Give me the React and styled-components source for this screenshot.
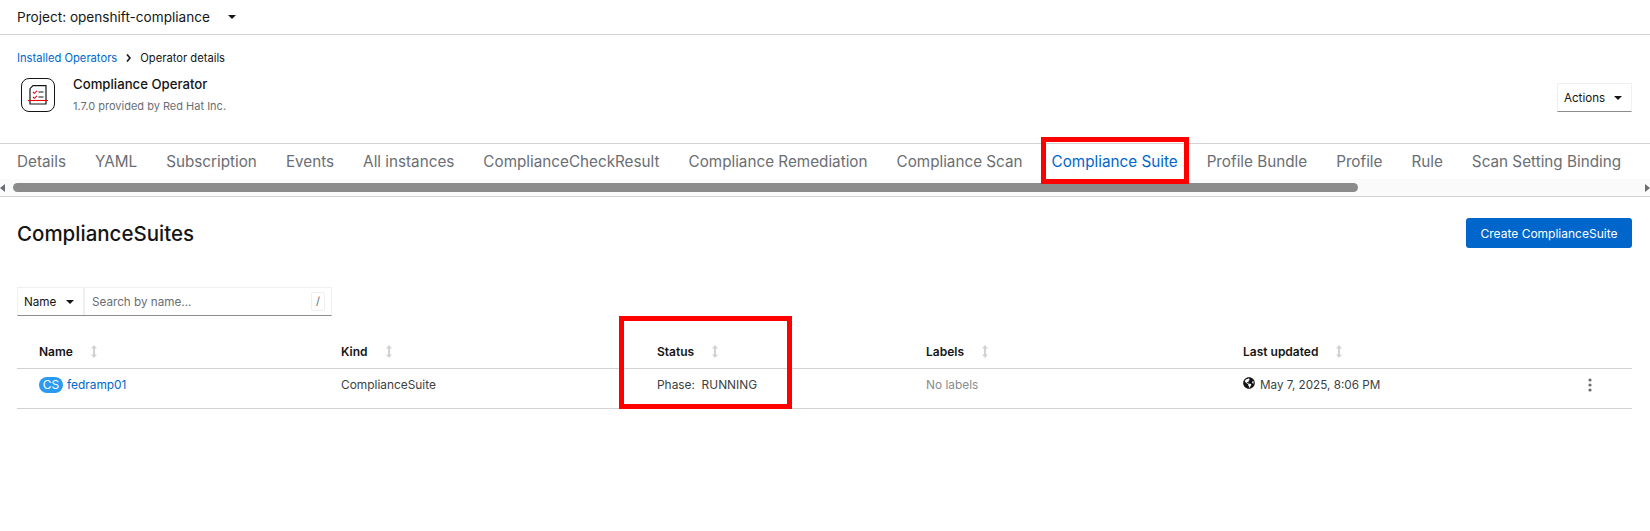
import React from 'react';
import styled, { createGlobalStyle } from 'styled-components';
import { FaGlobeAmericas } from 'react-icons/fa';

const GlobalStyle = createGlobalStyle`
    html, body {
        margin: 0;
        background: #fff;
        overflow: hidden;
    }
    body {
        font-family: "Inter", "Liberation Sans", sans-serif;
        color: #151515;
    }
`;

const Page = styled.div`
    position: relative;
    width: 1650px;
    height: 531px;
    overflow: hidden;
`;

const ProjectBar = styled.div`
    height: 34px;
    display: flex;
    align-items: center;
    padding-left: 17px;
    border-bottom: 1px solid #d2d2d2;
    font-size: 13.6px;
`;

const Caret = styled.span`
    display: inline-block;
    width: 0;
    height: 0;
    border-left: ${p => p.size || 4}px solid transparent;
    border-right: ${p => p.size || 4}px solid transparent;
    border-top: ${p => p.size || 4}px solid #151515;
    margin-left: ${p => p.gap || 0}px;
`;

const Header = styled.div`
    height: 108px;
    padding: 14px 18px 0 17px;
    display: flex;
    justify-content: space-between;
    box-sizing: border-box;
`;

const Breadcrumb = styled.div`
    display: flex;
    align-items: center;
    height: 18px;
    font-size: 11.2px;
    color: #151515;

    a {
        color: #0066cc;
    }

    svg {
        margin: 0 9px;
    }
`;

const Identity = styled.div`
    display: flex;
    margin: 11px 0 0 4px;
`;

const LogoBox = styled.div`
    width: 34px;
    height: 34px;
    box-sizing: border-box;
    border: 1.5px solid #151515;
    border-radius: 8px;
    display: flex;
    align-items: center;
    justify-content: center;
`;

const TitleBlock = styled.div`
    margin-left: 18px;
`;

const Title = styled.div`
    font-size: 13.2px;
    font-weight: 500;
    line-height: 16px;
    color: #151515;
    margin-top: -2px;
`;

const Subtitle = styled.div`
    font-size: 11px;
    line-height: 14px;
    margin-top: 7px;
    color: #6a6e73;
`;

const ActionsButton = styled.div`
    width: 75px;
    height: 29px;
    margin-top: 34px;
    padding-left: 6px;
    box-sizing: border-box;
    display: flex;
    align-items: center;
    font-size: 11.6px;
    border: 1px solid #f0f0f0;
    border-bottom-color: #8a8d90;
`;

const Tabs = styled.div`
    border-top: 1px solid #d2d2d2;
    border-bottom: 1px solid #d2d2d2;
    height: 54px;
    box-sizing: border-box;
`;

const TabRow = styled.div`
    display: flex;
    gap: 29px;
    height: 35px;
    align-items: center;
    padding-left: 17px;
    white-space: nowrap;
`;

const Tab = styled.span`
    font-size: 15.25px;
    color: ${p => (p.$active ? '#0066cc' : '#6a6e73')};
`;

const ScrollTrack = styled.div`
    height: 17px;
    background: #fafafa;
    display: flex;
    align-items: center;
    justify-content: space-between;
`;

const ScrollArrow = styled.span`
    width: 0;
    height: 0;
    border-top: 4px solid transparent;
    border-bottom: 4px solid transparent;
    ${p => (p.$right ? 'border-left: 5px solid #6a6e73;' : 'border-right: 5px solid #6a6e73;')}
`;

const ScrollThumb = styled.div`
    width: 1345px;
    height: 9px;
    background: #8b8b8b;
    border-radius: 5px;
    margin-right: 287px;
    margin-left: 8px;
`;

const Content = styled.div`
    padding: 21px 18px 0 17px;
`;

const SectionHead = styled.div`
    display: flex;
    align-items: center;
    justify-content: space-between;
    height: 30px;
`;

const Heading = styled.h1`
    margin: 0;
    font-size: 20.5px;
    font-weight: 500;
    color: #151515;
`;

const PrimaryButton = styled.div`
    width: 166px;
    height: 30px;
    border-radius: 3px;
    background: #0066cc;
    color: #fff;
    font-size: 12px;
    display: flex;
    align-items: center;
    justify-content: center;
`;

const Filter = styled.div`
    display: flex;
    width: 315px;
    height: 29px;
    margin-top: 39px;
    box-sizing: border-box;
    border: 1px solid #f0f0f0;
    border-bottom-color: #8a8d90;
    font-size: 11.7px;
`;

const FilterType = styled.div`
    width: 67px;
    box-sizing: border-box;
    padding-left: 6px;
    display: flex;
    align-items: center;
    border-right: 2px solid #f0f0f0;
`;

const SearchBox = styled.div`
    flex: 1;
    display: flex;
    align-items: center;
    justify-content: space-between;
    padding: 0 6px 0 7px;
    color: #6a6e73;
`;

const KeyHint = styled.span`
    width: 14px;
    height: 19px;
    box-sizing: border-box;
    border: 1px solid #f0f0f0;
    border-radius: 2px;
    text-align: center;
    font-size: 11px;
    line-height: 17px;
`;

const Row = styled.div`
    display: grid;
    grid-template-columns: 302px 316px 269px 317px 345px 44px;
    align-items: center;
    padding-left: 22px;
    height: ${p => p.$height}px;
    border-bottom: 1px solid #d2d2d2;
    box-sizing: border-box;
`;

const Table = styled.div`
    margin-top: 18px;
`;

const HeadCell = styled.div`
    display: flex;
    align-items: center;
    font-size: 12px;
    font-weight: 600;
    color: #151515;
`;

const Cell = styled.div`
    display: flex;
    align-items: center;
    font-size: 11.9px;
    color: ${p => (p.$muted ? '#8a8d90' : '#3c3f42')};
    position: relative;
    top: -4px;
`;

const Badge = styled.span`
    width: 24px;
    height: 16px;
    border-radius: 8px;
    background: #2b9af3;
    color: #fff;
    font-size: 12px;
    display: flex;
    align-items: center;
    justify-content: center;
    margin-right: 4px;
`;

const Link = styled.a`
    color: #0066cc;
`;

const SortIcon = styled.svg`
    margin-left: 18px;
`;

const Globe = styled(FaGlobeAmericas)`
    margin: -3px 5px 0 0;
    color: #151515;
`;

const DateText = styled.span`
    font-size: 11.7px;
`;

const Annotation = styled.div`
    position: absolute;
    left: ${p => p.$x}px;
    top: ${p => p.$y}px;
    width: ${p => p.$w}px;
    height: ${p => p.$h}px;
    box-sizing: border-box;
    border: 5px solid #ff0000;
`;

const Sort = () => (
    <SortIcon width="6" height="13" viewBox="0 0 6 13" fill="#d2d2d2">
        <path d="M3 0 L6 3.5 H4 V9.5 H6 L3 13 L0 9.5 H2 V3.5 H0 Z" />
    </SortIcon>
);

const tabs = ['Details', 'YAML', 'Subscription', 'Events', 'All instances', 'ComplianceCheckResult', 'Compliance Remediation', 'Compliance Scan', 'Compliance Suite', 'Profile Bundle', 'Profile', 'Rule', 'Scan Setting Binding'];
const columns = ['Name', 'Kind', 'Status', 'Labels', 'Last updated'];

export default function App() {
    return (
        <Page>
            <GlobalStyle />
            <ProjectBar>
                Project: openshift-compliance
                <Caret size={4} gap={18} />
            </ProjectBar>
            <Header>
                <div>
                    <Breadcrumb>
                        <a>Installed Operators</a>
                        <svg width="5" height="8" viewBox="0 0 5 8"><path d="M1 0.5 L4 4 L1 7.5" fill="none" stroke="#151515" strokeWidth="1.6" /></svg>
                        Operator details
                    </Breadcrumb>
                    <Identity>
                        <LogoBox>
                            <svg width="22" height="20" viewBox="0 0 22 20">
                                <path d="M6 0.7 H19 V19 H3 V3.700 Z" fill="none" stroke="#151515" strokeWidth="1.2" />
                                <path d="M6 7 L7.300 8.300 L10 5.800 M6 12 L7.300 13.300 L10 10.800" fill="none" stroke="#e00" strokeWidth="1.1" />
                                <path d="M11.500 7 H16.500 M11.500 12 H16.500" stroke="#151515" strokeWidth="1.1" />
                                <path d="M1 15.500 H21" stroke="#e00" strokeWidth="1.1" />
                            </svg>
                        </LogoBox>
                        <TitleBlock>
                            <Title>Compliance Operator</Title>
                            <Subtitle>1.7.0 provided by Red Hat Inc.</Subtitle>
                        </TitleBlock>
                    </Identity>
                </div>
                <ActionsButton>
                    Actions
                    <Caret size={4} gap={9} />
                </ActionsButton>
            </Header>
            <Tabs>
                <TabRow>
                    {tabs.map(t => <Tab key={t} $active={t === 'Compliance Suite'}>{t}</Tab>)}
                </TabRow>
                <ScrollTrack>
                    <ScrollArrow />
                    <ScrollThumb />
                    <ScrollArrow $right />
                </ScrollTrack>
            </Tabs>
            <Content>
                <SectionHead>
                    <Heading>ComplianceSuites</Heading>
                    <PrimaryButton>Create ComplianceSuite</PrimaryButton>
                </SectionHead>
                <Filter>
                    <FilterType>
                        Name
                        <Caret size={4} gap={10} />
                    </FilterType>
                    <SearchBox>
                        Search by name...
                        <KeyHint>/</KeyHint>
                    </SearchBox>
                </Filter>
                <Table>
                    <Row $height={35}>
                        {columns.map(c => <HeadCell key={c}>{c}<Sort /></HeadCell>)}
                    </Row>
                    <Row $height={40}>
                        <Cell><Badge>CS</Badge><Link>fedramp01</Link></Cell>
                        <Cell>ComplianceSuite</Cell>
                        <Cell>Phase:&nbsp;&nbsp;RUNNING</Cell>
                        <Cell $muted>No labels</Cell>
                        <Cell>
                            <Globe size={12} />
                            <DateText>May 7, 2025, 8:06 PM</DateText>
                        </Cell>
                        <Cell>
                            <svg width="4" height="14" viewBox="0 0 4 14" fill="#6a6e73">
                                <circle cx="2" cy="2" r="1.6" /><circle cx="2" cy="7" r="1.6" /><circle cx="2" cy="12" r="1.6" />
                            </svg>
                        </Cell>
                    </Row>
                </Table>
            </Content>
            <Annotation $x={1041} $y={137} $w={148} $h={47} />
            <Annotation $x={619} $y={316} $w={173} $h={93} />
        </Page>
    );
}
